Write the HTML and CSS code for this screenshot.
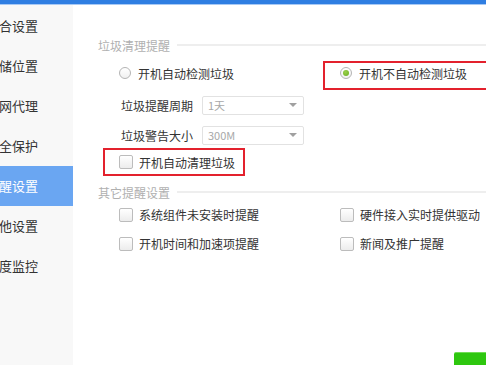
FILE: index.html
```html
<!DOCTYPE html>
<html lang="zh-CN">

<head>
    <meta charset="UTF-8">
    <meta name="viewport" content="width=device-width, initial-scale=1.0">
    <title>提醒设置</title>
    <link rel="stylesheet" href="styles.css">
</head>

<body>
    <div class="topbar"></div>
    <div class="wrap">
        <ul class="nav">
            <li><span>综合设置</span></li>
            <li><span>存储位置</span></li>
            <li><span>上网代理</span></li>
            <li><span>安全保护</span></li>
            <li class="active"><span>提醒设置</span></li>
            <li><span>其他设置</span></li>
            <li><span>温度监控</span></li>
        </ul>
        <div class="panel">
            <div class="title"><span>垃圾清理提醒</span><i></i></div>
            <div class="row two">
                <label class="opt"><b class="radio"></b>开机自动检测垃圾</label>
                <label class="opt marked mark-radio"><b class="radio on"></b>开机不自动检测垃圾</label>
            </div>
            <div class="row field">
                <span class="lbl">垃圾提醒周期</span>
                <div class="select"><span>1天</span><i></i></div>
            </div>
            <div class="row field">
                <span class="lbl">垃圾警告大小</span>
                <div class="select"><span>300M</span><i></i></div>
            </div>
            <div class="row short">
                <label class="opt marked mark-check"><b class="check"></b>开机自动清理垃圾</label>
            </div>
            <div class="title second"><span>其它提醒设置</span><i></i></div>
            <div class="row two tall">
                <label class="opt"><b class="check"></b>系统组件未安装时提醒</label>
                <label class="opt"><b class="check"></b>硬件接入实时提供驱动</label>
            </div>
            <div class="row two tall">
                <label class="opt"><b class="check"></b>开机时间和加速项提醒</label>
                <label class="opt"><b class="check"></b>新闻及推广提醒</label>
            </div>
            <div class="footer">
                <button class="ok">确定</button>
            </div>
        </div>
    </div>
</body>

</html>
```

FILE: styles.css
```css
* {
    padding: 0;
    margin: 0;
    box-sizing: border-box;
    font-family: "Noto Sans CJK SC", "Liberation Sans", sans-serif;
}

body {
    width: 486px;
    height: 365px;
    overflow: hidden;
    background-color: #fff;
}

.topbar {
    height: 5px;
    background-color: #2f7ee2;
    border-bottom: 1px solid #a8c9f4;
}

.wrap {
    display: flex;
    height: 360px;
}

.nav {
    width: 73px;
    flex: none;
    list-style: none;
    background-color: #f8f8f8;
    padding-top: 1px;
    overflow: hidden;
}

.nav li {
    height: 40px;
    line-height: 40px;
    font-size: 13px;
    color: #333;
    white-space: nowrap;
}

.nav li span {
    display: block;
    margin-left: -14px;
}

.nav li.active {
    background-color: #6aa6f2;
    color: #fff;
}

.panel {
    flex: 1;
    display: flex;
    flex-direction: column;
    padding: 32px 0 0 25px;
    overflow: hidden;
}

.title {
    display: flex;
    align-items: center;
    height: 16px;
    font-size: 12px;
    color: #b0b0b0;
}

.title i {
    flex: 1;
    height: 2px;
    margin-left: 7px;
    background-color: #eeeeee;
}

.title.second {
    margin-top: 10px;
}

.row {
    display: flex;
    align-items: center;
    height: 30px;
    padding-left: 21px;
    font-size: 12px;
    color: #333;
}

.row:nth-child(2) {
    margin-top: 5px;
    margin-bottom: 2px;
}

.row.short {
    height: 24px;
}

.row.tall {
    height: 29px;
}

.row.two {
    display: grid;
    grid-template-columns: 221px 1fr;
}

.opt {
    display: flex;
    align-items: center;
    white-space: nowrap;
}

.marked {
    position: relative;
}

.marked::after {
    content: "";
    position: absolute;
    border: 2px solid #e3212d;
}

.mark-radio::after {
    left: -17px;
    right: -8px;
    top: -4px;
    bottom: -8px;
}

.mark-check::after {
    left: -16px;
    right: -10px;
    top: -6px;
    bottom: -5px;
}

.radio {
    position: relative;
    width: 12px;
    height: 12px;
    margin-right: 7px;
    border: 1px solid #b4b4b4;
    border-radius: 50%;
    background: linear-gradient(#fff, #f0f0f0);
}

.radio.on::after {
    content: "";
    position: absolute;
    left: 2px;
    top: 2px;
    width: 6px;
    height: 6px;
    border-radius: 50%;
    background: radial-gradient(circle at 40% 35%, #9ad04a, #6aae22);
}

.check {
    width: 14px;
    height: 14px;
    margin-right: 6px;
    border: 1px solid #bcbcbc;
    border-radius: 2px;
    background: linear-gradient(#fff, #ececec);
}

.lbl {
    width: 83px;
    padding-left: 2px;
}

.select {
    display: flex;
    align-items: center;
    justify-content: space-between;
    width: 102px;
    height: 19px;
    padding: 0 6px 0 5px;
    border: 1px solid #e2e2e2;
    border-radius: 2px;
    font-size: 11px;
    color: #a8a8a8;
}

.select i {
    width: 0;
    height: 0;
    border-left: 4px solid transparent;
    border-right: 4px solid transparent;
    border-top: 4px solid #a0a0a0;
}

.footer {
    margin-top: auto;
    height: 13px;
    display: flex;
    justify-content: flex-end;
    overflow: hidden;
}

.ok {
    width: 32px;
    height: 26px;
    border: none;
    border-top: 1px solid #70dd55;
    border-radius: 2px 0 0 0;
    background-color: #2ec70f;
    color: #2ec70f;
    font-size: 12px;
}
```
